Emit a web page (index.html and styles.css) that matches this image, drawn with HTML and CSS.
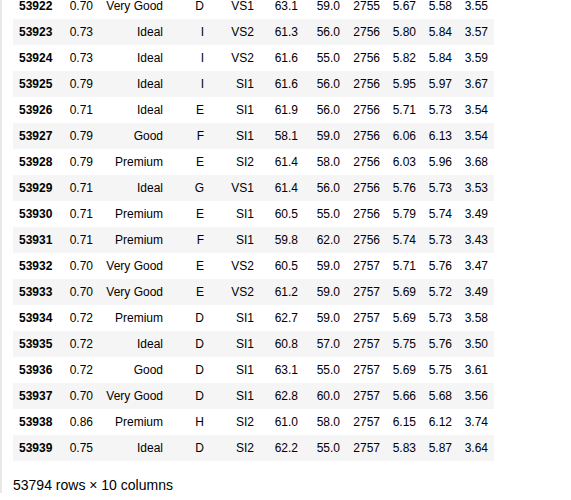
FILE: index.html
```html
<!DOCTYPE html>
<html>
<head>
<meta charset="utf-8">
<link rel="stylesheet" href="styles.css">
</head>
<body>
<div class="output">
  <table class="dataframe">
    <colgroup>
      <col class="c-idx"><col class="c-carat"><col class="c-cut"><col class="c-color"><col class="c-clarity"><col class="c-depth"><col class="c-table"><col class="c-price"><col class="c-xyz"><col class="c-xyz"><col class="c-xyz">
    </colgroup>
    <tbody>
      <tr><th>53922</th><td>0.70</td><td>Very Good</td><td>D</td><td>VS1</td><td>63.1</td><td>59.0</td><td>2755</td><td>5.67</td><td>5.58</td><td>3.55</td></tr>
      <tr><th>53923</th><td>0.73</td><td>Ideal</td><td>I</td><td>VS2</td><td>61.3</td><td>56.0</td><td>2756</td><td>5.80</td><td>5.84</td><td>3.57</td></tr>
      <tr><th>53924</th><td>0.73</td><td>Ideal</td><td>I</td><td>VS2</td><td>61.6</td><td>55.0</td><td>2756</td><td>5.82</td><td>5.84</td><td>3.59</td></tr>
      <tr><th>53925</th><td>0.79</td><td>Ideal</td><td>I</td><td>SI1</td><td>61.6</td><td>56.0</td><td>2756</td><td>5.95</td><td>5.97</td><td>3.67</td></tr>
      <tr><th>53926</th><td>0.71</td><td>Ideal</td><td>E</td><td>SI1</td><td>61.9</td><td>56.0</td><td>2756</td><td>5.71</td><td>5.73</td><td>3.54</td></tr>
      <tr><th>53927</th><td>0.79</td><td>Good</td><td>F</td><td>SI1</td><td>58.1</td><td>59.0</td><td>2756</td><td>6.06</td><td>6.13</td><td>3.54</td></tr>
      <tr><th>53928</th><td>0.79</td><td>Premium</td><td>E</td><td>SI2</td><td>61.4</td><td>58.0</td><td>2756</td><td>6.03</td><td>5.96</td><td>3.68</td></tr>
      <tr><th>53929</th><td>0.71</td><td>Ideal</td><td>G</td><td>VS1</td><td>61.4</td><td>56.0</td><td>2756</td><td>5.76</td><td>5.73</td><td>3.53</td></tr>
      <tr><th>53930</th><td>0.71</td><td>Premium</td><td>E</td><td>SI1</td><td>60.5</td><td>55.0</td><td>2756</td><td>5.79</td><td>5.74</td><td>3.49</td></tr>
      <tr><th>53931</th><td>0.71</td><td>Premium</td><td>F</td><td>SI1</td><td>59.8</td><td>62.0</td><td>2756</td><td>5.74</td><td>5.73</td><td>3.43</td></tr>
      <tr><th>53932</th><td>0.70</td><td>Very Good</td><td>E</td><td>VS2</td><td>60.5</td><td>59.0</td><td>2757</td><td>5.71</td><td>5.76</td><td>3.47</td></tr>
      <tr><th>53933</th><td>0.70</td><td>Very Good</td><td>E</td><td>VS2</td><td>61.2</td><td>59.0</td><td>2757</td><td>5.69</td><td>5.72</td><td>3.49</td></tr>
      <tr><th>53934</th><td>0.72</td><td>Premium</td><td>D</td><td>SI1</td><td>62.7</td><td>59.0</td><td>2757</td><td>5.69</td><td>5.73</td><td>3.58</td></tr>
      <tr><th>53935</th><td>0.72</td><td>Ideal</td><td>D</td><td>SI1</td><td>60.8</td><td>57.0</td><td>2757</td><td>5.75</td><td>5.76</td><td>3.50</td></tr>
      <tr><th>53936</th><td>0.72</td><td>Good</td><td>D</td><td>SI1</td><td>63.1</td><td>55.0</td><td>2757</td><td>5.69</td><td>5.75</td><td>3.61</td></tr>
      <tr><th>53937</th><td>0.70</td><td>Very Good</td><td>D</td><td>SI1</td><td>62.8</td><td>60.0</td><td>2757</td><td>5.66</td><td>5.68</td><td>3.56</td></tr>
      <tr><th>53938</th><td>0.86</td><td>Premium</td><td>H</td><td>SI2</td><td>61.0</td><td>58.0</td><td>2757</td><td>6.15</td><td>6.12</td><td>3.74</td></tr>
      <tr><th>53939</th><td>0.75</td><td>Ideal</td><td>D</td><td>SI2</td><td>62.2</td><td>55.0</td><td>2757</td><td>5.83</td><td>5.87</td><td>3.64</td></tr>
    </tbody>
  </table>
  <p class="shape">53794 rows × 10 columns</p>
</div>
</body>
</html>
```

FILE: styles.css
```css
html, body {
  margin: 0;
  padding: 0;
  background: #fff;
  overflow: hidden;
}
body {
  font-family: "Liberation Sans", Arial, Helvetica, sans-serif;
  color: #000;
  height: 500px;
}
.output {
  border-left: 2px solid #e8e8e8;
  padding-left: 11px;
  height: 500px;
  box-sizing: border-box;
}
.dataframe {
  border-collapse: collapse;
  border-spacing: 0;
  table-layout: fixed;
  width: 481px;
  margin-top: -7px;
  font-size: 12px;
}
.c-idx { width: 46px; }
.c-carat { width: 40px; }
.c-cut { width: 70px; }
.c-color { width: 41px; }
.c-clarity { width: 50px; }
.c-depth { width: 44px; }
.c-table { width: 42px; }
.c-price { width: 40px; }
.c-xyz { width: 36px; }
.dataframe th,
.dataframe td {
  padding: 6px;
  line-height: 14px;
  text-align: right;
  vertical-align: middle;
  white-space: nowrap;
  border: none;
}
.dataframe th {
  font-weight: bold;
  text-align: left;
}
.dataframe tbody tr:nth-child(even) {
  background: #f5f5f5;
}
.shape {
  margin: 16px 0 0 0;
  font-size: 14px;
  line-height: 16px;
}
```
